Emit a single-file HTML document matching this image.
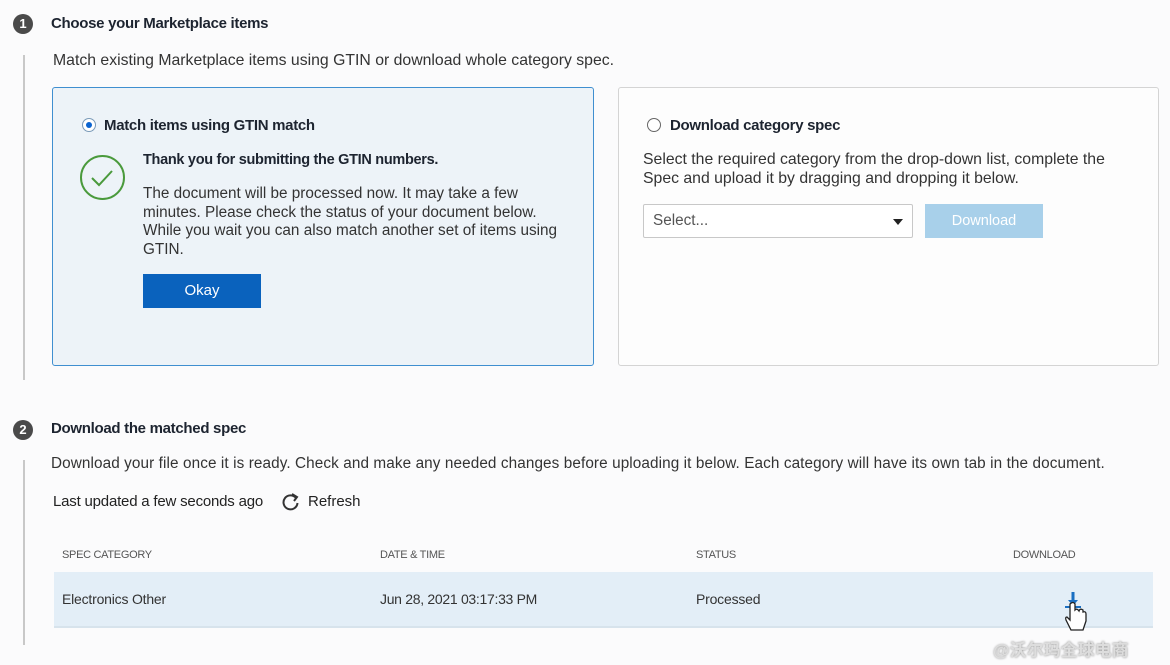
<!DOCTYPE html>
<html><head><meta charset="utf-8"><style>
*{margin:0;padding:0;box-sizing:border-box}
body{width:1170px;height:665px;background:#fbfbfc;font-family:"Liberation Sans",sans-serif;color:#2a2f36;position:relative;overflow:hidden}
.a{position:absolute;white-space:nowrap}
.num{position:absolute;width:20px;height:20px;border-radius:50%;background:#4a4a4a;color:#fff;font-size:13px;font-weight:bold;text-align:center;line-height:20px}
.h{font-size:15px;font-weight:bold;color:#1d2430;letter-spacing:-0.3px}
.t{font-size:15.3px;color:#333}
.vl{position:absolute;left:23px;width:2px;background:#c8c8c8}
.th{font-size:11px;color:#555;letter-spacing:-0.3px}
</style></head><body>
<div class="num" style="left:13px;top:14px">1</div>
<div class="a h" style="left:51px;top:15px">Choose your Marketplace items</div>
<div class="vl" style="top:55px;height:325px"></div>
<div class="a t" style="left:53px;top:52px;font-size:15.8px">Match existing Marketplace items using GTIN or download whole category spec.</div>

<div class="a" style="left:52px;top:87px;width:542px;height:279px;border:1.5px solid #3f8fd0;border-radius:3px;background:#edf3f8"></div>
<div class="a" style="left:82px;top:118px;width:14px;height:14px;border-radius:50%;border:1.5px solid #7a9ab8;background:#fff"><div style="position:absolute;left:2.5px;top:2.5px;width:6px;height:6px;border-radius:50%;background:#0a63d0"></div></div>
<div class="a h" style="left:104px;top:117px">Match items using GTIN match</div>
<svg class="a" style="left:79px;top:154px" width="48" height="48" viewBox="0 0 48 48"><circle cx="23.5" cy="23.5" r="21.5" fill="none" stroke="#4a9a3c" stroke-width="2"/><path d="M13 24 L20 31 L33 17" fill="none" stroke="#4a9a3c" stroke-width="2"/></svg>
<div class="a h" style="left:143px;top:152px;font-size:14.5px">Thank you for submitting the GTIN numbers.</div>
<div class="a t" style="left:143px;top:185px;line-height:18.5px">The document will be processed now. It may take a few<br>minutes. Please check the status of your document below.<br>While you wait you can also match another set of items using<br>GTIN.</div>
<div class="a" style="left:143px;top:274px;width:118px;height:34px;background:#0a62bd;color:#fff;font-size:15px;text-align:center;line-height:34px">Okay</div>

<div class="a" style="left:618px;top:87px;width:541px;height:279px;border:1px solid #d4d4d4;border-radius:3px;background:#fdfdfd"></div>
<div class="a" style="left:647px;top:118px;width:14px;height:14px;border-radius:50%;border:1.3px solid #666;background:#fff"></div>
<div class="a h" style="left:670px;top:117px">Download category spec</div>
<div class="a t" style="left:643px;top:151px;line-height:18.5px;font-size:15.8px">Select the required category from the drop-down list, complete the<br>Spec and upload it by dragging and dropping it below.</div>
<div class="a" style="left:643px;top:204px;width:270px;height:34px;border:1px solid #c8c8c8;border-radius:2px;background:#fff"></div>
<div class="a t" style="left:653px;top:212px;color:#555">Select...</div>
<div class="a" style="left:893px;top:219px;width:0;height:0;border-left:5px solid transparent;border-right:5px solid transparent;border-top:6px solid #222"></div>
<div class="a" style="left:925px;top:204px;width:118px;height:34px;background:#a8d0ea;color:#fff;font-size:14.5px;text-align:center;line-height:34px">Download</div>

<div class="num" style="left:13px;top:420px">2</div>
<div class="a h" style="left:51px;top:420px">Download the matched spec</div>
<div class="vl" style="top:460px;height:185px"></div>
<div class="a t" style="left:51px;top:455px;font-size:15.3px;letter-spacing:0.1px">Download your file once it is ready. Check and make any needed changes before uploading it below. Each category will have its own tab in the document.</div>
<div class="a t" style="left:53px;top:493px;font-size:15px;color:#222;letter-spacing:-0.2px">Last updated a few seconds ago</div>
<svg class="a" style="left:282px;top:492px" width="18" height="20" viewBox="0 0 18 20"><path d="M14 6 A7 7 0 1 0 15.5 11" fill="none" stroke="#333" stroke-width="2"/><path d="M10 2 L15 5 L12 9" fill="none" stroke="#333" stroke-width="2"/></svg>
<div class="a t" style="left:308px;top:493px;font-size:15px;color:#222">Refresh</div>

<div class="a th" style="left:62px;top:549px">SPEC CATEGORY</div>
<div class="a th" style="left:380px;top:549px">DATE &amp; TIME</div>
<div class="a th" style="left:696px;top:549px">STATUS</div>
<div class="a th" style="left:1013px;top:549px">DOWNLOAD</div>
<div class="a" style="left:54px;top:572px;width:1099px;height:56px;background:#e3eef7;border-bottom:2px solid #d7e3ec"></div>
<div class="a t" style="left:62px;top:591px;font-size:14px;letter-spacing:-0.2px">Electronics Other</div>
<div class="a t" style="left:380px;top:591px;font-size:14px;letter-spacing:-0.3px">Jun 28, 2021 03:17:33 PM</div>
<div class="a t" style="left:696px;top:591px;font-size:14px;letter-spacing:-0.2px">Processed</div>
<svg class="a" style="left:1062px;top:590px" width="28" height="46" viewBox="0 0 28 46"><path d="M11 2 V12" stroke="#1a6fc2" stroke-width="3"/><path d="M6 10 L11 16 L16 10Z" fill="#1a6fc2"/><path d="M3 17 H19" stroke="#1a6fc2" stroke-width="2"/><path d="M8 14 V30 L5 27 Q3 27 4 30 L9 40 H21 L24 31 V24 Q24 21 21 22 V20 Q18 18 17 21 Q15 18 13 20 V14 Q11 11 8 14Z" fill="#fff" stroke="#222" stroke-width="1.3"/></svg>
<div class="a" style="left:993px;top:636px;font-size:17px;font-weight:bold;color:#ddd;font-family:'Liberation Sans','Noto Sans CJK SC',sans-serif;text-shadow:0 0 2px #888">@沃尔玛全球电商</div>
</body></html>
